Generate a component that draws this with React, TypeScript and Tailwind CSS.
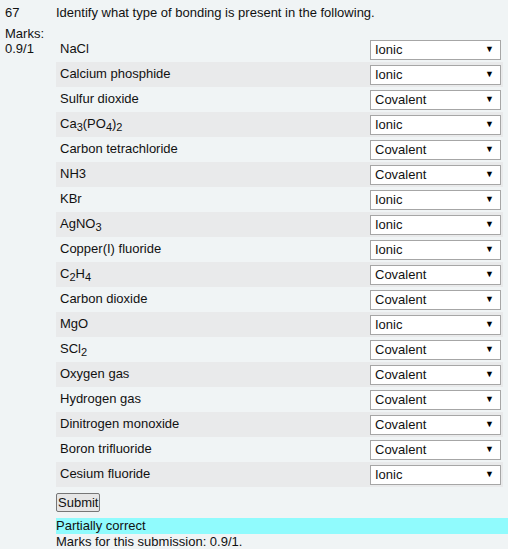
import React from 'react'

type Row = { label: React.ReactNode; answer: string }

const Sub = ({ children }: { children: React.ReactNode }) => (
    <sub className="text-[11px]">{children}</sub>
)

const rows: Row[] = [
    { label: 'NaCl', answer: 'Ionic' },
    { label: 'Calcium phosphide', answer: 'Ionic' },
    { label: 'Sulfur dioxide', answer: 'Covalent' },
    { label: <>Ca<Sub>3</Sub>(PO<Sub>4</Sub>)<Sub>2</Sub></>, answer: 'Ionic' },
    { label: 'Carbon tetrachloride', answer: 'Covalent' },
    { label: 'NH3', answer: 'Covalent' },
    { label: 'KBr', answer: 'Ionic' },
    { label: <>AgNO<Sub>3</Sub></>, answer: 'Ionic' },
    { label: 'Copper(I) fluoride', answer: 'Ionic' },
    { label: <>C<Sub>2</Sub>H<Sub>4</Sub></>, answer: 'Covalent' },
    { label: 'Carbon dioxide', answer: 'Covalent' },
    { label: 'MgO', answer: 'Ionic' },
    { label: <>SCl<Sub>2</Sub></>, answer: 'Covalent' },
    { label: 'Oxygen gas', answer: 'Covalent' },
    { label: 'Hydrogen gas', answer: 'Covalent' },
    { label: 'Dinitrogen monoxide', answer: 'Covalent' },
    { label: 'Boron trifluoride', answer: 'Covalent' },
    { label: 'Cesium fluoride', answer: 'Ionic' },
]

function FakeSelect({ value }: { value: string }) {
    return (
        <div className="w-[131px] h-[20px] bg-white border border-[#a6a6a6] flex items-center justify-between pl-[4px] pr-[6px]">
            <span>{value}</span>
            <span className="text-[9px] text-black">▼</span>
        </div>
    )
}

export default function App() {
    return (
        <div className="w-[508px] h-[549px] bg-[#f0f4f5] text-[13px] leading-[15px] text-[#111] flex overflow-hidden" style={{ fontFamily: '"Liberation Sans", Arial, sans-serif' }}>
            {/* left info column */}
            <div className="w-[56px] shrink-0 pl-[5px] pt-[5px] flex flex-col">
                <div>67</div>
                <div className="mt-[6px]">Marks:</div>
                <div>0.9/1</div>
            </div>

            {/* question body */}
            <div className="flex-1 pt-[5px] flex flex-col items-start">
                <div>Identify what type of bonding is present in the following.</div>
                <div className="mt-[17px] w-[447px] flex flex-col">
                    {rows.map((r, i) => (
                        <div key={i} className={`h-[25px] flex items-center justify-between pl-[4px] pr-[2px] ${i % 2 === 1 ? 'bg-[#e9eaeb]' : ''}`}>
                            <span className="pb-[2px]">{r.label}</span>
                            <FakeSelect value={r.answer} />
                        </div>
                    ))}
                </div>
                <button className="mt-[6px] h-[21px] px-[1px] border border-[#767676] bg-[#e6e6e6] rounded-[2px] text-[13px] leading-[15px]">Submit</button>
                <div className="mt-[6px] self-stretch bg-[#90fbfd] h-[16px] leading-[16px]">Partially correct</div>
                <div>Marks for this submission: 0.9/1.</div>
            </div>
        </div>
    )
}
